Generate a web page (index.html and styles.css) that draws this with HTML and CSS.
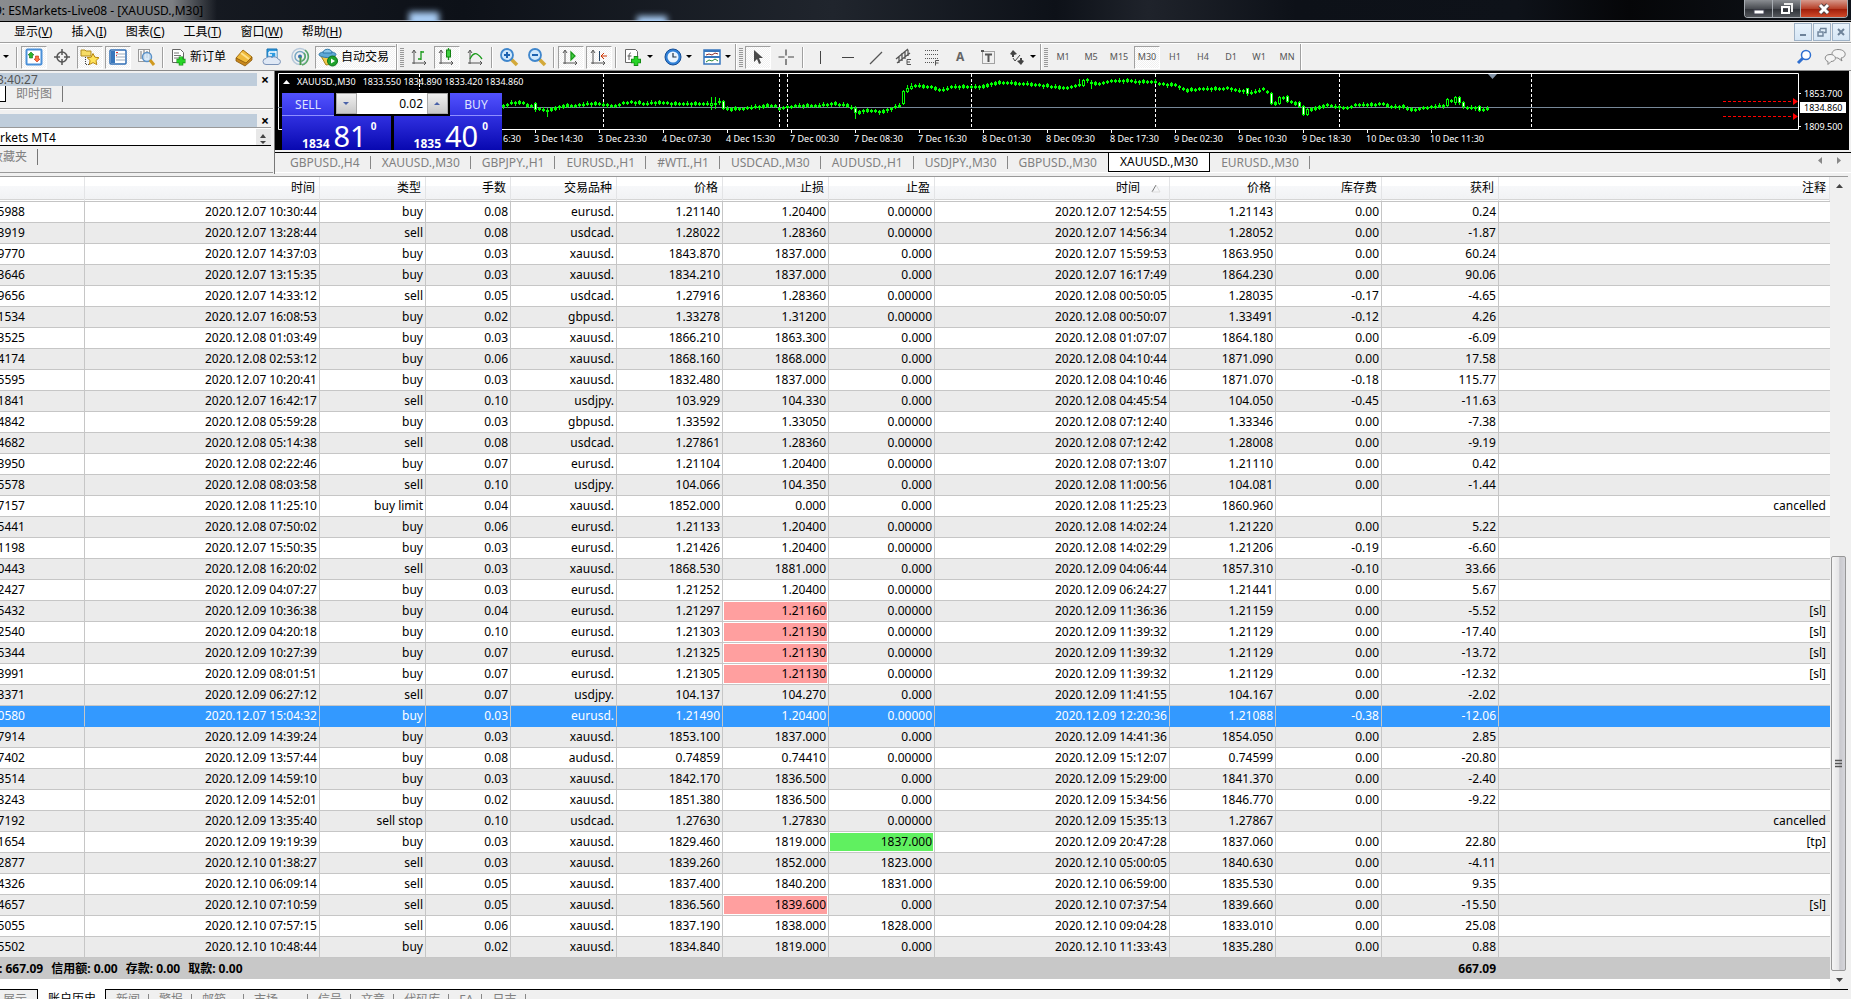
FILE: index.html
```html
<!DOCTYPE html>
<html lang="zh-CN">
<head>
<meta charset="utf-8">
<title>ESMarkets-Live08 - [XAUUSD.,M30]</title>
<link rel="stylesheet" href="styles.css">
</head>
<body>
<header class="titlebar">
  <span class="titletext">9: ESMarkets-Live08 - [XAUUSD.,M30]</span>
  <i class="glow glow-a"></i><i class="glow glow-b"></i>
  <div class="winbtns">
    <button aria-label="最小化"><svg width="12" height="14"><rect x="1" y="8" width="10" height="4" fill="#fff" stroke="#445" stroke-width="1"/></svg></button>
    <button aria-label="还原"><svg width="14" height="14"><path d="M4 2h8v8" fill="none" stroke="#eee" stroke-width="2"/><rect x="2" y="5" width="7" height="6" fill="none" stroke="#fff" stroke-width="2"/></svg></button>
    <button class="close" aria-label="关闭"><svg width="14" height="14"><path d="M3 3l8 8M11 3l-8 8" stroke="#544" stroke-width="5"/><path d="M3 3l8 8M11 3l-8 8" stroke="#fff" stroke-width="3"/></svg></button>
  </div>
</header>

<nav class="menubar">
  <button>显示(<u>V</u>)</button><button>插入(<u>I</u>)</button><button>图表(<u>C</u>)</button><button>工具(<u>T</u>)</button><button>窗口(<u>W</u>)</button><button>帮助(<u>H</u>)</button>
  <div class="mdi">
    <button aria-label="最小化"><svg width="10" height="10"><path d="M2 8h6" stroke="#6d8299" stroke-width="2"/></svg></button>
    <button aria-label="还原"><svg width="10" height="10"><path d="M3 1.5h6v4H7M1 5h5v4H1zM3 2v2" fill="none" stroke="#6d8299" stroke-width="1.4"/></svg></button>
    <button aria-label="关闭"><svg width="10" height="10"><path d="M2 2l6 6M8 2l-6 6" stroke="#6d8299" stroke-width="2"/></svg></button>
  </div>
</nav>

<div class="toolbar">
  <div class="group first">
    <button class="tb narrow" aria-label="更多"><svg width="7" height="4"><path d="M0 0h6L3 3z"/></svg></button>
    <i class="sep"></i>
    <button class="tb on" aria-label="市场报价"><svg width="20" height="20"><rect x="2.5" y="2.5" width="15" height="15" rx="1" fill="#fff" stroke="#4a90d9" stroke-width="2"/><path d="M7 5l3 3H8.500v3h-3V8H4z" fill="#2eb52e" stroke="#137013" stroke-width=".6"/><path d="M13 15l3-3h-1.500V9h-3v3H10z" fill="#ff7440" stroke="#c02a10" stroke-width=".6"/></svg></button>
    <button class="tb" aria-label="数据窗口"><svg width="20" height="20" fill="none" stroke="#555"><circle cx="10" cy="10" r="5" stroke-width="1.500"/><path d="M10 2v6M10 12v6M2 10h6M12 10h6" stroke-width="1.500"/></svg></button>
    <button class="tb on" aria-label="导航"><svg width="20" height="20"><path d="M1 3h4l1 1h5v5H1z" fill="#f6dc66" stroke="#b08a20"/><path d="M5.500 10v8M6 17.500h4" fill="none" stroke="#444" stroke-dasharray="1 1"/><path d="M13 6.500l1.900 3.700 4.100.5-3 2.800.8 4.100-3.800-2-3.700 2 .8-4.100-3-2.800 4.100-.5z" fill="#ffe35a" stroke="#b8860b"/></svg></button>
    <button class="tb on" aria-label="终端"><svg width="20" height="20"><rect x="2" y="3" width="16" height="14" rx="1" fill="#fff" stroke="#2f6db5" stroke-width="1.500"/><rect x="3" y="4" width="4" height="12" fill="#3876bb"/><path d="M8 7h9M8 10h9M8 13h9" stroke="#9ab"/><path d="M8 5.500h2M8 8.500h1" stroke="#d33"/></svg></button>
    <button class="tb" aria-label="策略测试"><svg width="20" height="20"><rect x="2.500" y="2.500" width="11" height="12" fill="#fafafa" stroke="#999"/><path d="M5 4v8M8 3v9M11 4v7" stroke="#777"/><circle cx="11" cy="10" r="4.500" fill="#cfe6fa" fill-opacity=".8" stroke="#5b92c8" stroke-width="1.500"/><path d="M14 13l4 5" stroke="#d09a20" stroke-width="3"/></svg></button>
    <i class="sep"></i>
    <button class="tb text"><svg width="20" height="20"><path d="M3.500 2.500h8l3 3v10h-11z" fill="#fff" stroke="#666"/><path d="M5 6h5M5 8.500h7M5 11h5" stroke="#777"/><path d="M12 9.500v9M7.500 14h9" stroke="#148a14" stroke-width="4.500"/><path d="M12 10v8M8 14h8" stroke="#27d427" stroke-width="3"/></svg><span>新订单</span></button>
    <button class="tb" aria-label="编辑器"><svg width="20" height="20"><path d="M2 11l7-8 9 7-6 7z" fill="#efb93a" stroke="#a46f10"/><path d="M2 11v3l9 5 7-6v-3l-6 6z" fill="#c8871c" stroke="#8a5a0c" stroke-width=".8"/><path d="M7 6l8 6" stroke="#ffe28b" stroke-width="2"/></svg></button>
    <button class="tb" aria-label="社区"><svg width="20" height="20"><path d="M5 2h10v9H5z" fill="#2f9be0" stroke="#1770b0"/><path d="M7 5h7M7 5v3h3M14 4v6" stroke="#fff" stroke-width="1.300" fill="none"/><path d="M4 17.500a3 3 0 0 1 0-6 4 3.500 0 0 1 6-1 4 3.500 0 0 1 6 1.500 3 2.800 0 0 1 0 5.500z" fill="#dfe8f5" stroke="#7b93b8"/></svg></button>
    <button class="tb" aria-label="信号"><svg width="20" height="20" fill="none"><circle cx="10" cy="9.500" r="8" stroke="#b6c8da" stroke-width="1.500"/><circle cx="10" cy="9.500" r="5" stroke="#77a7c4" stroke-width="1.500"/><path d="M12 18a8.500 8.500 0 0 0 3-15M12 14a5 5 0 0 0 2-8" stroke="#58a868" stroke-width="1.500"/><circle cx="10" cy="9.500" r="2" fill="#3a72b0"/><path d="M10.500 10v8" stroke="#4a9a4a" stroke-width="2"/></svg></button>
    <button class="tb on text"><svg width="20" height="20"><path d="M3 9h14l-3 8-6 1z" fill="#f2c84a" stroke="#a8821c"/><ellipse cx="9.500" cy="7.500" rx="8.500" ry="3" fill="#5fa9d6" stroke="#2c77a8"/><path d="M5 6c0-5 9-5 9 0z" fill="#8cc7ea" stroke="#2c77a8"/><circle cx="14.500" cy="14" r="5" fill="#1fa32c" stroke="#0c7417"/><path d="M13 11.500v5l4-2.500z" fill="#fff"/></svg><span>自动交易</span></button>
  </div>
  <div class="group">
    <i class="grip"></i>
    <button class="tb" aria-label="柱状图"><svg width="20" height="20" class="ax"><path d="M5 4v13M3 16h14M3 6l2-3 2 3M15 14l2 2-2 2"/><path d="M12 4v9M12 5h3M9 12h3" class="gr"/></svg></button>
    <button class="tb on" aria-label="蜡烛图"><svg width="20" height="20" class="ax"><path d="M4 4v13M2 16h14M2 6l2-3 2 3M14 14l2 2-2 2"/><path d="M11.500 1v12" class="gr"/><rect x="9.500" y="3" width="4" height="7" fill="#3fd03f" stroke="#128012"/></svg></button>
    <button class="tb" aria-label="折线图"><svg width="20" height="20" class="ax"><path d="M5 4v13M3 16h14M3 6l2-3 2 3M15 14l2 2-2 2"/><path d="M5 12c3-6 6-8 12 0" class="gr"/></svg></button>
    <i class="sep"></i>
    <button class="tb" aria-label="放大"><svg width="20" height="20"><path d="M12 12l6 6" stroke="#d3a93a" stroke-width="3.500"/><circle cx="8" cy="8" r="6" fill="#cfe7fb" stroke="#3f86cc" stroke-width="1.800"/><path d="M8 5v6M5 8h6" stroke="#1d62b0" stroke-width="2"/></svg></button>
    <button class="tb" aria-label="缩小"><svg width="20" height="20"><path d="M12 12l6 6" stroke="#d3a93a" stroke-width="3.500"/><circle cx="8" cy="8" r="6" fill="#cfe7fb" stroke="#3f86cc" stroke-width="1.800"/><path d="M5 8h6" stroke="#1d62b0" stroke-width="2"/></svg></button>
    <i class="sep"></i>
    <button class="tb on" aria-label="自动滚动"><svg width="20" height="20" class="ax"><path d="M4 4v13M2 16h14M2 6l2-3 2 3M14 14l2 2-2 2"/><path d="M10 5v8l4-4z" fill="#3fd03f" class="gr"/></svg></button>
    <button class="tb on" aria-label="图表平移"><svg width="20" height="20" class="ax"><path d="M4 4v13M2 16h14M2 6l2-3 2 3M14 14l2 2-2 2"/><path d="M10.500 4v10" style="stroke:#246"/><path d="M18 9h-5M15 6l-3 3 3 3" style="stroke:#c30"/></svg></button>
    <i class="sep"></i>
    <button class="tb drop" aria-label="指标"><svg width="20" height="20"><path d="M1.500 2.500h10l2 2v11h-12z" fill="#fff" stroke="#666"/><path d="M7 6c-2 0-2 1-2 7M3.500 9h4" stroke="#555" fill="none"/><path d="M12 9v10M7 14h10" stroke="#148a14" stroke-width="4.500"/><path d="M12 10v8M8 14h8" stroke="#27d427" stroke-width="3"/></svg><svg width="7" height="4"><path d="M0 0h6L3 3z"/></svg></button>
    <button class="tb drop" aria-label="周期"><svg width="20" height="20"><circle cx="10" cy="10" r="8" fill="#2f80d8" stroke="#174f96"/><circle cx="10" cy="10" r="5.500" fill="#e9f4ff"/><path d="M10 6v4h3.500" stroke="#234" stroke-width="1.200" fill="none"/></svg><svg width="7" height="4"><path d="M0 0h6L3 3z"/></svg></button>
    <button class="tb drop" aria-label="模板"><svg width="20" height="20"><rect x="2" y="3" width="16" height="14" fill="#fff" stroke="#3775bd" stroke-width="1.500"/><path d="M2 4h16M2 10h16" stroke="#3775bd" stroke-width="2"/><path d="M4 8l3-1 3 1 3-2 3 1" stroke="#8a3030" fill="none"/><path d="M4 15l3-2 3 1 3-2 3 2" stroke="#2a8a3a" fill="none"/></svg><svg width="7" height="4"><path d="M0 0h6L3 3z"/></svg></button>
  </div>
  <div class="group">
    <i class="grip"></i>
    <button class="tb on" aria-label="光标"><svg width="20" height="20"><path d="M6 3v12l3-3 2 5 2-1-2-5h4z" fill="#4a4a4a"/></svg></button>
    <button class="tb" aria-label="十字准线"><svg width="20" height="20"><path d="M10 2.500v6M10 12v6M2.500 10h6M12 10h6" stroke="#444" stroke-width="1.200"/></svg></button>
    <i class="sep"></i>
    <button class="tb" aria-label="垂直线"><svg width="20" height="20"><path d="M10.500 4v13" stroke="#444"/></svg></button>
    <button class="tb" aria-label="水平线"><svg width="20" height="20"><path d="M4 10.500h12" stroke="#444"/></svg></button>
    <button class="tb" aria-label="趋势线"><svg width="20" height="20"><path d="M4 17L16 5" stroke="#555" stroke-width="1.300"/></svg></button>
    <button class="tb" aria-label="等距通道"><svg width="20" height="20" fill="none" stroke="#555"><path d="M2 12L14 2M3 16L16 6M5 9v7M8 6v8M11 4v8M14 3v6" stroke-width="1.300"/><path d="M17 12.500h-4v5h4M13 15h3"/></svg></button>
    <button class="tb" aria-label="斐波那契"><svg width="20" height="20" fill="none" stroke="#555"><path d="M3 3.500h14M3 7.500h14M3 11.500h14M3 15.500h9" stroke-dasharray="1 1"/><path d="M17 13.500h-3.500v5M13.500 16h3"/></svg></button>
    <button class="tb letter">A</button>
    <button class="tb" aria-label="文字标签"><svg width="20" height="20" fill="none" stroke="#555"><rect x="4.500" y="4.500" width="12" height="12" stroke-dasharray="1 1"/><path d="M7 7.500h7M10.500 7v8" stroke-width="2"/><path d="M3 4h3" stroke-width="2"/></svg></button>
    <button class="tb drop" aria-label="箭头"><svg width="20" height="20" fill="#444"><path d="M3 7l3-4 4 4-3 1v2H5V8zM10 14l3-1v-2h2v2l2 1-3 4z"/><path d="M6 11l2 3 5-6" stroke="#444" fill="none"/></svg><svg width="7" height="4"><path d="M0 0h6L3 3z"/></svg></button>
  </div>
  <div class="group times">
    <i class="grip"></i>
    <button class="tb">M1</button><button class="tb">M5</button><button class="tb">M15</button><button class="tb on">M30</button><button class="tb">H1</button><button class="tb">H4</button><button class="tb">D1</button><button class="tb">W1</button><button class="tb">MN</button>
  </div>
  <div class="right">
    <button class="tb" aria-label="搜索"><svg width="20" height="20"><path d="M9 11l-5 5" stroke="#2f6fd0" stroke-width="3"/><circle cx="12" cy="8" r="4.500" fill="#fff" stroke="#2f6fd0" stroke-width="1.500"/></svg></button>
    <button class="tb" aria-label="消息"><svg width="22" height="20" fill="#f4f4f4" stroke="#888"><path d="M14 2.500c9 0 9 8 3 8.500l1 3-4-3c-8 0-8-8.500 0-8.500z"/><path d="M6 7.500c7 0 7 7 1 7l-3 3v-3c-4-1-4-7 2-7z"/></svg></button>
  </div>
</div>

<main class="work">
  <aside class="side">
    <section class="panel">
      <div class="ptitle"><span>3:40:27</span><button aria-label="关闭">×</button></div>
      <div class="ptabs one"><i class="cut"></i><button>即时图</button></div>
    </section>
    <section class="panel two">
      <div class="ptitle"><span></span><button aria-label="关闭">×</button></div>
      <div class="tree"><span>rkets MT4</span><div class="mini"><svg width="7" height="4"><path d="M0 4h6L3 0z" fill="#444"/></svg><svg width="7" height="4"><path d="M0 0h6L3 3z" fill="#444"/></svg></div></div>
      <div class="ptabs fav"><button>收藏夹</button></div>
    </section>
  </aside>
  <section class="chartcol">
    <div class="chart">
      <svg class="plot" height="79">
        <g transform="translate(-275 -71)">
          <path d="M3000 73.500H278.500V129.500H3000" fill="none" stroke="#fff"/>
          <path d="M278 107.500H3000" stroke="#778899"/>
          <path id="days" d="M419.500 74V90M603.500 74V129M779.500 74V129M787.500 74V129M971.500 74V129M1155.500 74V129M1339.500 74V129M1531.500 74V129" stroke="#fff" stroke-dasharray="3 2"/>
          <path d="M1488 74h9l-4.500 5z" fill="#8394a8"/>
          <g id="candles"></g>
          <g id="axis" class="ctext"></g>
        </g>
      </svg>
      <svg class="price" width="126" height="79">
        <path d="M0 2.500H75.500V58.500H0M75 22.500h3M75 55.500h3" fill="none" stroke="#fff"/>
        <path d="M0 36.500H75" stroke="#778899"/>
        <path d="M0 30.500H71M0 45.500H71" stroke="#f00" stroke-dasharray="3 2"/>
        <path d="M70 27l5 3.500-5 3.500zM70 42l5 3.500-5 3.500z" fill="#f00"/>
        <rect x="77" y="31" width="46" height="11" fill="#fff"/>
        <g class="ctext"><text x="81" y="26">1853.700</text><text x="81" y="40" class="dark">1834.860</text><text x="81" y="59">1809.500</text></g>
      </svg>
      <div class="quote"><svg width="7" height="4"><path d="M0 4h7L3.500 0z" fill="#fff"/></svg><span>XAUUSD.,M30</span><span>1833.550 1834.890 1833.420 1834.860</span></div>
      <div class="trade">
        <div class="trow">
          <button class="side-btn">SELL</button>
          <div class="lots"><button aria-label="减少"><svg width="7" height="4"><path d="M0 0h6L3 3z" fill="#4a62a8"/></svg></button><input value="0.02" aria-label="手数"><button aria-label="增加"><svg width="7" height="4"><path d="M0 3h6L3 0z" fill="#4a62a8"/></svg></button></div>
          <button class="side-btn">BUY</button>
        </div>
        <div class="prow">
          <div class="pbox"><b>1834</b><span>81</span><sup>0</sup></div>
          <div class="pbox"><b>1835</b><span>40</span><sup>0</sup></div>
        </div>
      </div>
    </div>
    <div class="ctabs">
      <button>GBPUSD.,H4</button><button>XAUUSD.,M30</button><button>GBPJPY.,H1</button><button>EURUSD.,H1</button><button>#WTI.,H1</button><button>USDCAD.,M30</button><button>AUDUSD.,H1</button><button>USDJPY.,M30</button><button class="nb">GBPUSD.,M30</button><button class="act">XAUUSD.,M30</button><button>EURUSD.,M30</button>
      <div class="arrows"><button aria-label="向左"><svg width="4" height="7"><path d="M4 0v7L0 3.500z" fill="#888"/></svg></button><button aria-label="向右"><svg width="4" height="7"><path d="M0 0v7l4-3.500z" fill="#888"/></svg></button></div>
    </div>
  </section>
</main>

<section class="terminal">
  <div class="grid">
    <table>
      <colgroup><col class="c-id"><col class="c-time"><col class="c-106"><col class="c-lots"><col class="c-106"><col class="c-106"><col class="c-106"><col class="c-106"><col class="c-time"><col class="c-106"><col class="c-106"><col class="c-profit"><col></colgroup>
      <thead><tr><th></th><th>时间</th><th>类型</th><th>手数</th><th>交易品种</th><th>价格</th><th>止损</th><th>止盈</th><th>时间<svg class="sort" width="10" height="9"><path d="M1 8L5 1" stroke="#777" fill="none"/><path d="M5 1l4 7H1" stroke="#ddd" fill="none"/></svg></th><th>价格</th><th>库存费</th><th>获利</th><th>注释</th></tr></thead>
      <tbody id="rows"></tbody>
      <tfoot><tr><td colspan="11" class="sum"><span>: 667.09</span><span>信用额: 0.00</span><span>存款: 0.00</span><span>取款: 0.00</span></td><td>667.09</td><td></td></tr></tfoot>
    </table>
  </div>
  <div class="vscroll">
    <button aria-label="向上"><svg width="7" height="4"><path d="M0 4h7L3.500 0z" fill="#444"/></svg></button>
    <div class="track"><i class="space"></i><i class="thumb"><svg width="7" height="9"><path d="M0 1.500h7M0 4.500h7M0 7.500h7" stroke="#555" stroke-width="1.500"/></svg></i></div>
    <button aria-label="向下"><svg width="7" height="4"><path d="M0 0h7L3.500 4z" fill="#444"/></svg></button>
  </div>
</section>
<nav class="btabs">
  <button class="nb">展示</button><button class="act">账户历史</button><button>新闻</button><button>警报</button><button class="wide">邮箱</button><button class="wider">市场</button><button>信号</button><button>文章</button><button>代码库</button><button>EA</button><button>日志</button>
</nav>
<script src="script.js"></script>
</body>
</html>
```
FILE: styles.css
```css
* { box-sizing: border-box; }
body {
  margin: 0; height: 100vh; overflow: hidden;
  display: flex; flex-direction: column;
  background: #f0f0f0; color: #000;
  font: 12px/18px "Noto Sans", "Noto Sans CJK SC", sans-serif;
}
button { font: inherit; color: inherit; background: none; border: 0; padding: 0; margin: 0; white-space: nowrap; display: flex; align-items: center; justify-content: center; }
svg { display: block; flex: none; }

/* title bar */
.titlebar { position: relative; display: flex; flex: none; height: 22px; overflow: hidden; justify-content: space-between; border-bottom: 1px solid #000; box-shadow: inset 0 -1px #9a9a9f; background: linear-gradient(90deg, #1c2028, #0d1118 25%, #20252d 45%, #0d1118 57%, #1f232b 62%, #0d1118 70%, #0e1219 82%, #050608 88%, #10141b); }
.titletext { padding: 2px 14px 0 0; margin-left: -5px; height: 21px; color: #000; background: linear-gradient(90deg, #8a8c8f, #7c7f83 80%, transparent); }
.glow { position: absolute; top: 12px; width: 30px; height: 14px; background: #a9cdf5; filter: blur(3px); }
.glow-a { left: 409px; }
.glow-b { left: 637px; top: 16px; }
.winbtns { display: flex; height: 18px; margin-right: 3px; border: 1px solid #a8adb3; border-top: 0; border-radius: 0 0 4px 4px; overflow: hidden; }
.winbtns button { width: 28px; background: linear-gradient(#8a8d92, #4a4d53 50%, #2c2f35 51%, #54575c); border-right: 1px solid #a8adb3; }
.winbtns .close { width: 46px; border: 0; background: linear-gradient(#d79a8c, #b8412a 50%, #9c1b08 51%, #d04a2a); }

/* menu */
.menubar { display: flex; flex: none; height: 21px; padding-left: 5px; border-bottom: 1px solid #a0a0a0; }
.menubar > button { padding: 0 10px 0 9px; }
.mdi { margin-left: auto; display: flex; gap: 1px; padding: 1px 1px 0 0; }
.mdi button { width: 18px; height: 18px; border: 1px solid #9fb2c6; background: linear-gradient(#e8f2fb, #d6e6f5); }

/* toolbar */
.toolbar { display: flex; flex: none; height: 28px; border-top: 1px solid #fff; border-bottom: 1px solid #8a8a8a; }
.group { display: flex; align-items: center; gap: 2px; padding-left: 2px; border-right: 1px solid #a0a0a0; box-shadow: 1px 0 #fff; margin-right: 1px; }
.group.first { padding-left: 0; }
.tb { width: 26px; height: 23px; color: #555; }
.tb.on { border: 1px solid; border-color: #a0a0a0 #fff #fff #a0a0a0; background: repeating-conic-gradient(#fff 0 25%, #f0f0f0 0 50%) 0 0 / 2px 2px; }
.tb.narrow { width: 13px; }
.tb.drop { width: 37px; gap: 3px; }
.tb.text { width: auto; padding: 0 3px 0 2px; gap: 1px; color: #000; }
.tb.text.on { padding-right: 6px; gap: 3px; }
.tb.letter { font: bold 12px/18px "Noto Sans", sans-serif; color: #666; }
.times { font-size: 9px; }
.sep { width: 2px; height: 21px; margin: 0 1px; background: #a0a0a0; border-right: 1px solid #fff; }
.grip { width: 4px; height: 19px; background: repeating-linear-gradient(#999 0 1px, #f0f0f0 1px 2px); }
.right { margin-left: auto; display: flex; align-items: center; gap: 5px; padding-right: 3px; }
.ax { fill: none; stroke: #555; }
.ax .gr { stroke: #1a9a1a; stroke-width: 1.3; }

/* workspace */
.work { display: flex; flex: none; }
.side { width: 275px; flex: none; border-right: 1px solid #777; padding-right: 1px; overflow: hidden; }
.panel { height: 38px; border-bottom: 1px solid #999; }
.panel.two { height: 64px; padding-top: 2px; border-top: 1px solid #fff; }
.ptitle { display: flex; align-items: center; justify-content: space-between; height: 15px; padding-top: 1px; }
.ptitle span { width: 257px; height: 13px; line-height: 13px; background: #bfcddb; color: #555; text-indent: -3px; }
.ptitle button { width: 16px; height: 13px; font: bold 14px/13px "Noto Sans", sans-serif; }
.ptabs { display: flex; color: #808080; }
.ptabs button { height: 16px; border-right: 1px solid #777; }
.ptabs.one button { padding: 0 10px; }
.ptabs .cut { width: 6px; height: 16px; border: solid #000; border-width: 0 1px 1px 0; background: #fff; }
.tree { display: flex; justify-content: space-between; height: 19px; margin-right: 2px; background: #fff; border-top: 1px solid #999; border-bottom: 1px solid #000; line-height: 18px; padding-top: 1px; overflow: hidden; }
.mini { width: 15px; background: #e8e8e8; display: flex; flex-direction: column; align-items: center; justify-content: space-between; padding-top: 5px; }
.ptabs.fav { padding-top: 3px; }
.ptabs.fav button { margin-left: -9px; padding-right: 10px; }

/* chart */
.chartcol { flex: 1; min-width: 0; }
.chart { position: relative; display: flex; height: 79px; margin-right: 2px; background: #000; overflow: hidden; }
.plot { flex: 1; min-width: 0; overflow: hidden; }
.ctext { font-size: 9px; fill: #fff; }
.ctext .dark { fill: #000; }
.quote { position: absolute; left: 8px; top: 4px; display: flex; align-items: center; gap: 7px; color: #fff; font-size: 9px; line-height: 14px; }
.trade { position: absolute; left: 7px; top: 22px; width: 220px; height: 57px; background: #000; overflow: hidden; }
.trow { display: flex; justify-content: space-between; height: 23px; }
.side-btn { width: 52px; color: #dfe3ff; background: linear-gradient(#5252ff, #3434e4); padding-top: 1px; border-bottom: 1px solid #8f8fff; }
.lots { display: flex; height: 21px; background: #fff; }
.lots button { width: 21px; background: linear-gradient(#f0f0f0, #c9c9c9); border: 1px solid #aaa; }
.lots input { width: 70px; border: 0; padding: 0 4px; font: inherit; text-align: right; }
.prow { display: flex; gap: 3px; height: 34px; }
.pbox { flex: 1; display: flex; align-items: flex-end; justify-content: center; gap: 4px; padding-left: 6px; color: #fff; background: linear-gradient(#3030e0, #0808b0); }
.pbox b { line-height: 13px; }
.pbox span { font-size: 29px; line-height: 28px; }
.pbox sup { align-self: flex-start; font-weight: bold; line-height: 20px; }

.ctabs { display: flex; height: 22px; margin-top: 2px; padding: 0 0 2px 4px; border-top: 1px solid #000; color: #808080; background: linear-gradient(#f0f0f0 0 19px, #fff 19px 20px, #f0f0f0 20px); }
.ctabs > button { padding: 0 11px; height: 19px; background: linear-gradient(#888, #888) right 3px / 1px 13px no-repeat; }
.ctabs > .nb { background: none; }
.ctabs > .act { height: 19px; background: #fff; color: #000; border: solid #000; border-width: 0 1px 1px; }
.arrows { margin-left: auto; display: flex; gap: 15px; padding: 0 10px 4px 0; }

/* history */
.terminal { display: flex; flex: none; margin-top: 2px; margin-right: 3px; border-top: 1px solid #999; background: #fff; }
.grid { flex: 1; min-width: 0; overflow: hidden; padding-bottom: 10px; }
table { table-layout: fixed; width: calc(100% + 60px); margin-left: -60px; border-collapse: separate; border-spacing: 0; }
.c-id { width: 145px; }
.c-time { width: 235px; }
.c-106 { width: 106px; }
.c-lots { width: 85px; }
.c-profit { width: 117px; }
th { height: 25px; padding: 0 5px 2px 0; font-weight: normal; text-align: right; line-height: 18px; border-bottom: 1px solid #c4c4c4; background: linear-gradient(#fff 0 9px, #f7f8fa 9px, #f1f2f4 22px, #d5d5d5 22px 23px, #fff 23px); box-shadow: inset -1px 0 #e3e4e6; }
th .sort { display: inline-block; margin: 0 4px 0 11px; vertical-align: middle; }
td { height: 21px; padding: 0 2px 0 0; line-height: 20px; text-align: right; white-space: nowrap; overflow: hidden; border: solid #c6c6c6; border-width: 0 1px 1px 0; }
td:first-child { padding-right: 59px; }
td:last-child, th:last-child { padding-right: 4px; border-right: 0; }
tbody tr:nth-child(even) { background: #ebebeb; }
tbody tr.sel { background: #3399ff; color: #fff; }
tr.sel td { border-bottom-color: #3399ff; }
td.sl, td.tp { background: #ff9f9f; box-shadow: inset 0 0 0 1px #fff; }
td.tp { background: #60f060; }
tfoot td { background: #c8c8c8; border: 0; font-weight: bold; }
tfoot td:nth-child(2) { padding-right: 3px; }
tfoot .sum { text-align: left; padding-left: 59px; }
.sum span { margin-right: 8px; }

.vscroll { width: 18px; display: flex; flex-direction: column; background: #f0f0f0; }
.vscroll button { height: 18px; }
.track { flex: 1; display: flex; flex-direction: column; padding: 0 2px 0 1px; }
.space { flex: 361; }
.thumb { flex: 414; display: flex; align-items: center; justify-content: center; border: 1px solid #979797; border-radius: 2px; background: linear-gradient(90deg, #f5f5f5, #e6e6e8 50%, #c9c9ce 60%, #d5d5da); }

/* bottom tabs */
.btabs { display: flex; flex: none; height: 24px; border-top: 1px solid #000; margin-right: 3px; color: #808080; }
.btabs button { padding: 0 9px 0 10px; height: 20px; background: linear-gradient(#888, #888) right 4px / 1px 14px no-repeat; }
.btabs .nb { padding: 0 10px 0 3px; background: none; }
.btabs .act { margin-top: -1px; height: 21px; color: #000; background: #fff; border: solid #000; border-width: 0 1px 1px; }
.btabs .wide { padding-right: 18px; }
.btabs .wider { padding-right: 30px; }
```
FILE: script.js
```js
// id|open time|type|lots|symbol|price|sl|tp|close time|price|swap|profit|comment|mark
const data = `5988|07 10:30:44|buy|0.08|eurusd|1.21140|1.20400|0.00000|07 12:54:55|1.21143|0.00|0.24
3919|07 13:28:44|sell|0.08|usdcad|1.28022|1.28360|0.00000|07 14:56:34|1.28052|0.00|-1.87
9770|07 14:37:03|buy|0.03|xauusd|1843.870|1837.000|0.000|07 15:59:53|1863.950|0.00|60.24
3646|07 13:15:35|buy|0.03|xauusd|1834.210|1837.000|0.000|07 16:17:49|1864.230|0.00|90.06
9656|07 14:33:12|sell|0.05|usdcad|1.27916|1.28360|0.00000|08 00:50:05|1.28035|-0.17|-4.65
1534|07 16:08:53|buy|0.02|gbpusd|1.33278|1.31200|0.00000|08 00:50:07|1.33491|-0.12|4.26
3525|08 01:03:49|buy|0.03|xauusd|1866.210|1863.300|0.000|08 01:07:07|1864.180|0.00|-6.09
4174|08 02:53:12|buy|0.06|xauusd|1868.160|1868.000|0.000|08 04:10:44|1871.090|0.00|17.58
5595|07 10:20:41|buy|0.03|xauusd|1832.480|1837.000|0.000|08 04:10:46|1871.070|-0.18|115.77
1841|07 16:42:17|sell|0.10|usdjpy|103.929|104.330|0.000|08 04:45:54|104.050|-0.45|-11.63
4842|08 05:59:28|buy|0.03|gbpusd|1.33592|1.33050|0.00000|08 07:12:40|1.33346|0.00|-7.38
4682|08 05:14:38|sell|0.08|usdcad|1.27861|1.28360|0.00000|08 07:12:42|1.28008|0.00|-9.19
3950|08 02:22:46|buy|0.07|eurusd|1.21104|1.20400|0.00000|08 07:13:07|1.21110|0.00|0.42
5578|08 08:03:58|sell|0.10|usdjpy|104.066|104.350|0.000|08 11:00:56|104.081|0.00|-1.44
7157|08 11:25:10|buy limit|0.04|xauusd|1852.000|0.000|0.000|08 11:25:23|1860.960|||cancelled
5441|08 07:50:02|buy|0.06|eurusd|1.21133|1.20400|0.00000|08 14:02:24|1.21220|0.00|5.22
1198|07 15:50:35|buy|0.03|eurusd|1.21426|1.20400|0.00000|08 14:02:29|1.21206|-0.19|-6.60
0443|08 16:20:02|sell|0.03|xauusd|1868.530|1881.000|0.000|09 04:06:44|1857.310|-0.10|33.66
2427|09 04:07:27|buy|0.03|eurusd|1.21252|1.20400|0.00000|09 06:24:27|1.21441|0.00|5.67
5432|09 10:36:38|buy|0.04|eurusd|1.21297|1.21160|0.00000|09 11:36:36|1.21159|0.00|-5.52|[sl]
2540|09 04:20:18|buy|0.10|eurusd|1.21303|1.21130|0.00000|09 11:39:32|1.21129|0.00|-17.40|[sl]
5344|09 10:27:39|buy|0.07|eurusd|1.21325|1.21130|0.00000|09 11:39:32|1.21129|0.00|-13.72|[sl]
3991|09 08:01:51|buy|0.07|eurusd|1.21305|1.21130|0.00000|09 11:39:32|1.21129|0.00|-12.32|[sl]
3371|09 06:27:12|sell|0.07|usdjpy|104.137|104.270|0.000|09 11:41:55|104.167|0.00|-2.02
0580|07 15:04:32|buy|0.03|eurusd|1.21490|1.20400|0.00000|09 12:20:36|1.21088|-0.38|-12.06||sel
7914|09 14:39:24|buy|0.03|xauusd|1853.100|1837.000|0.000|09 14:41:36|1854.050|0.00|2.85
7402|09 13:57:44|buy|0.08|audusd|0.74859|0.74410|0.00000|09 15:12:07|0.74599|0.00|-20.80
3514|09 14:59:10|buy|0.03|xauusd|1842.170|1836.500|0.000|09 15:29:00|1841.370|0.00|-2.40
3243|09 14:52:01|buy|0.02|xauusd|1851.380|1836.500|0.000|09 15:34:56|1846.770|0.00|-9.22
7192|09 13:35:40|sell stop|0.10|usdcad|1.27630|1.27830|0.00000|09 15:35:13|1.27867|||cancelled
1654|09 19:19:39|buy|0.03|xauusd|1829.460|1819.000|1837.000|09 20:47:28|1837.060|0.00|22.80|[tp]
2877|10 01:38:27|sell|0.03|xauusd|1839.260|1852.000|1823.000|10 05:00:05|1840.630|0.00|-4.11
4326|10 06:09:14|sell|0.05|xauusd|1837.400|1840.200|1831.000|10 06:59:00|1835.530|0.00|9.35
4657|10 07:10:59|sell|0.05|xauusd|1836.560|1839.600|0.000|10 07:37:54|1839.660|0.00|-15.50|[sl]
5055|10 07:57:15|sell|0.06|xauusd|1837.190|1838.000|1828.000|10 09:04:28|1833.010|0.00|25.08
5502|10 10:48:44|buy|0.02|xauusd|1834.840|1819.000|0.000|10 11:33:43|1835.280|0.00|0.88`;

const body = document.getElementById('rows');
for (const line of data.split('\n')) {
  const f = line.split('|');
  while (f.length < 13) f.push('');
  const tr = body.insertRow();
  if (f[13]) tr.className = f[13];
  f.slice(0, 13).forEach((v, i) => {
    const td = tr.insertCell();
    td.textContent = i === 1 || i === 8 ? '2020.12.' + v : i === 4 ? v + '.' : v;
    if (i === 6 && f[12] === '[sl]') td.className = 'sl';
    if (i === 7 && f[12] === '[tp]') td.className = 'tp';
  });
}

// mid-price path of the chart: x, y
const path = [503,105,511,102,523,102,527,105,531,105,535,107,543,109,547,111,551,109,559,106,571,105,587,103,599,103,615,105,623,102,631,101,643,103,655,102,680,103,708,103,720,101,724,105,728,109,740,108,756,106,775,105,779,108,787,106,800,105,820,105,830,103,845,104,851,107,855,110,859,112,863,110,875,110,883,111,887,109,895,106,899,105,903,97,907,90,911,86,915,85,931,86,939,89,947,88,951,86,963,86,983,86,991,83,1003,82,1023,83,1035,84,1055,86,1063,87,1071,86,1079,84,1083,82,1087,79,1091,84,1103,82,1111,80,1155,81,1159,83,1175,84,1179,86,1187,90,1200,88,1219,88,1227,87,1235,89,1243,90,1247,92,1255,91,1263,88,1267,91,1271,98,1275,103,1279,100,1283,97,1287,98,1291,101,1299,104,1303,110,1307,112,1311,109,1319,107,1327,104,1335,106,1347,107,1355,104,1371,104,1383,103,1391,106,1403,106,1411,109,1415,109,1423,107,1443,105,1447,101,1451,100,1455,99,1459,100,1463,106,1467,107,1475,107,1479,109,1487,108];
// candles with tall bodies or wicks: x -> [high, top, bottom, low, hollow]
const tall = {535:[102,103,109,111,0],547:[108,110,111,116,0],711:[97,103,105,109,1],715:[97,103,104,108,0],719:[98,101,102,104,0],723:[100,101,108,109,0],855:[106,108,112,118,0],903:[90,91,103,104,1],907:[85,88,91,92,1],911:[83,86,88,89,1],1079:[79,84,85,86,0],1083:[79,80,85,86,1],1091:[80,82,83,88,0],1247:[88,88,93,95,0],1271:[92,93,103,104,0],1279:[96,97,103,104,1],1287:[95,96,101,102,0],1299:[101,102,106,107,0],1303:[105,106,114,115,0],1307:[108,109,114,115,1],1447:[98,99,105,106,1],1455:[96,97,102,104,1],1459:[96,97,102,104,0],1463:[101,102,106,108,0],1479:[105,106,110,111,0]};
let svg = '', k = 0;
for (let x = 503; x < 1490; x += 4) {
  while (k + 2 < path.length - 2 && path[k + 2] < x) k += 2;
  const t = Math.min(1, (x - path[k]) / (path[k + 2] - path[k]));
  const y = Math.round(path[k + 1] + t * (path[k + 3] - path[k + 1]));
  const n = (x * 7 + y * 3) % 5;
  const c = tall[x] || [y - 1 - (n > 2), y - (n > 3), y + 1, y + 2 + (n === 1), n === 2];
  svg += `<path d="M${x + .5} ${c[0]}V${c[3] + 1}" stroke="#0f0"/><rect x="${x - .5}" y="${c[1] + .5}" width="2" height="${c[2] - c[1]}" stroke="#0f0" fill="${c[4] ? '#000' : x in tall ? '#fff' : '#0f0'}"/>`;
}
document.getElementById('candles').innerHTML = svg;

const labels = ['3 Dec 14:30','3 Dec 23:30','4 Dec 07:30','4 Dec 15:30','7 Dec 00:30','7 Dec 08:30','7 Dec 16:30','8 Dec 01:30','8 Dec 09:30','8 Dec 17:30','9 Dec 02:30','9 Dec 10:30','9 Dec 18:30','10 Dec 03:30','10 Dec 11:30'];
document.getElementById('axis').innerHTML = '<text x="503" y="142">6:30</text>' + labels.map((s, i) =>
  `<path d="M${535.5 + 64 * i} 130v3" stroke="#fff"/><text x="${534 + 64 * i}" y="142">${s}</text>`).join('');
```
